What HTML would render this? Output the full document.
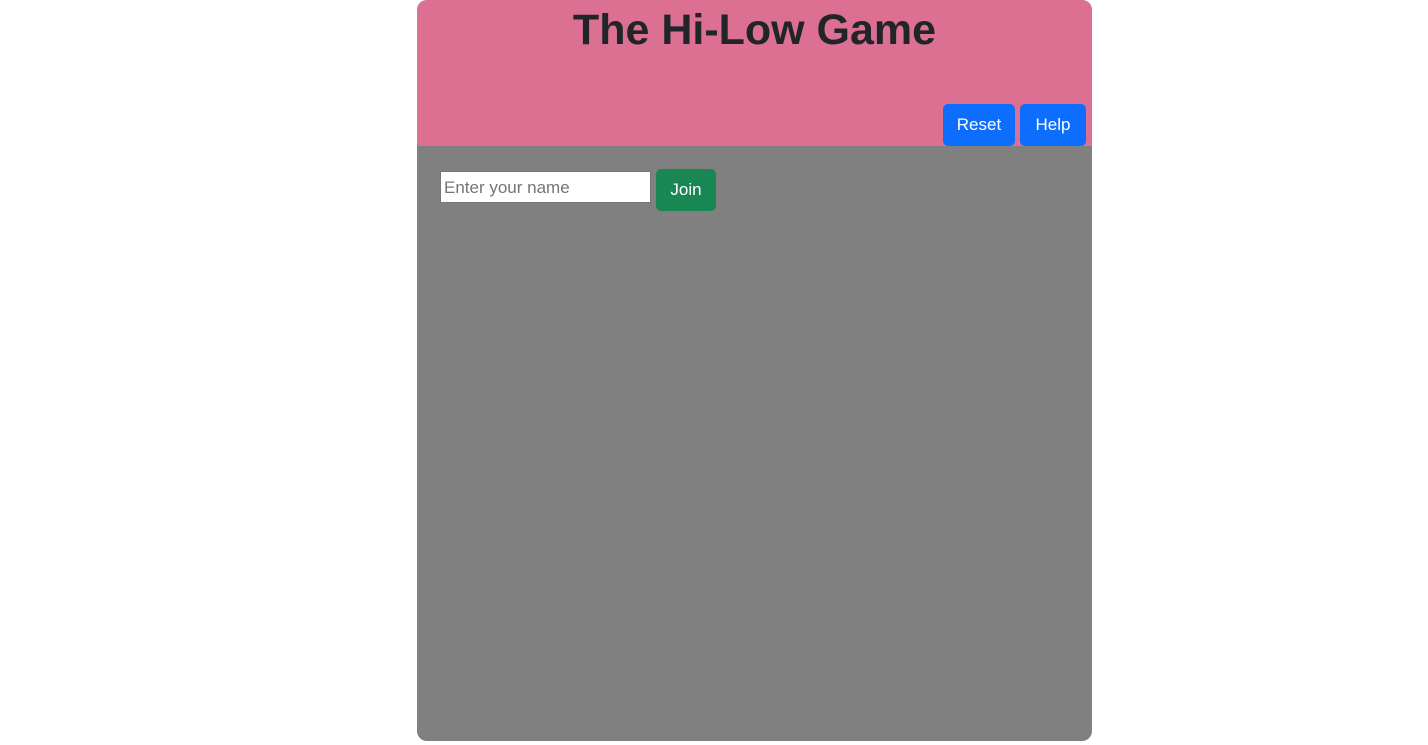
<!DOCTYPE html>
<html><head><style>
body{margin:0;background:#fff;font-family:"Liberation Sans",sans-serif;}
.c{position:absolute;left:417px;top:0;width:675px;height:741px;background:#808080;border-radius:10px;overflow:hidden;}
.h{position:absolute;left:0;top:0;width:675px;height:146px;background:#db7093;}
h1{position:absolute;left:0;right:0;top:6px;margin:0;text-align:center;font-size:43px;font-weight:bold;color:#212529;letter-spacing:0px;}
.b{position:absolute;color:#fff;font-size:17px;border-radius:5px;display:flex;align-items:center;justify-content:center;}
.in{position:absolute;left:23px;top:171px;background:#fff;border:1px solid #767676;font-size:17px;color:#757575;line-height:32px;padding-left:3px;box-sizing:border-box;width:211px;height:32px;}
</style></head><body>
<div class="c">
<div class="h"><h1>The Hi-Low Game</h1>
<div class="b" style="left:526px;top:104px;width:72px;height:42px;background:#0d6efd">Reset</div>
<div class="b" style="left:603px;top:104px;width:66px;height:42px;background:#0d6efd">Help</div>
</div>
<div class="in">Enter your name</div>
<div class="b" style="left:239px;top:169px;width:60px;height:42px;background:#198754">Join</div>
</div>
</body></html>
